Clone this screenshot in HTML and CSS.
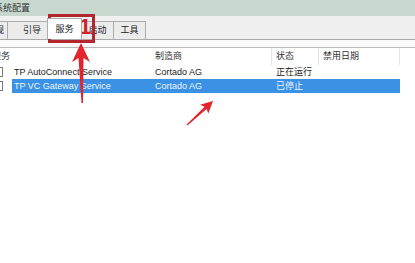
FILE: index.html
```html
<!DOCTYPE html>
<html lang="zh-CN">
<head>
    <meta charset="UTF-8">
    <title>系统配置</title>
    <link rel="stylesheet" href="styles.css">
</head>
<body>
    <div class="window">
        <div class="titlebar"><span class="title">系统配置</span></div>

        <div class="tabstrip">
            <div class="tab first">常规</div>
            <div class="tab second">引导</div>
            <div class="tab active">服务</div>
            <div class="tab">启动</div>
            <div class="tab">工具</div>
        </div>

        <div class="panel">
            <div class="list">
                <div class="row head">
                    <div class="cell name-head">服务</div>
                    <div class="cell">制造商</div>
                    <div class="cell">状态</div>
                    <div class="cell">禁用日期</div>
                </div>
                <div class="row">
                    <div class="chk"><span class="box"></span></div>
                    <div class="cell">TP AutoConnect Service</div>
                    <div class="cell">Cortado AG</div>
                    <div class="cell">正在运行</div>
                    <div class="cell"></div>
                </div>
                <div class="row selected">
                    <div class="chk"><span class="box"></span></div>
                    <div class="cell">TP VC Gateway Service</div>
                    <div class="cell">Cortado AG</div>
                    <div class="cell">已停止</div>
                    <div class="cell"></div>
                </div>
            </div>
        </div>
    </div>

    <!-- annotations drawn over the screenshot -->
    <div class="mark-box"></div>
    <div class="mark-num">1</div>
    <svg class="arrows" width="415" height="263" viewBox="0 0 415 263">
        <polygon points="81,43 90,62 83.5,58 83,103 81.5,103 78.5,58 72,62" fill="#e3242b"/>
        <polygon points="213,101 208.3,113.5 206.6,108.9 187.4,125.4 186.6,124.6 204.6,106.7 200.1,104.7" fill="#e3242b"/>
    </svg>
</body>
</html>
```

FILE: styles.css
```css
body {
    margin: 0;
    width: 415px;
    height: 263px;
    overflow: hidden;
    background: #fff;
    font-family: "Liberation Sans", "Noto Sans CJK SC", sans-serif;
    font-size: 9px;
    color: #1c1c1c;
    position: relative;
}
.titlebar {
    height: 16px;
    line-height: 16px;
    background: #c9d8cf;
    color: #333;
    overflow: hidden;
    white-space: nowrap;
}
.title {
    display: inline-block;
    margin-left: -6px;
}
.tabstrip {
    height: 23px;
    background: #f0f0f0;
    border-bottom: 1px solid #a9a9a9;
    display: flex;
    align-items: flex-end;
    overflow: hidden;
}
.tab {
    width: 33px;
    height: 18px;
    line-height: 17px;
    box-sizing: border-box;
    text-align: center;
    border: 1px solid #acacac;
    border-bottom: none;
    margin-right: -1px;
    background: #ececec;
    color: #222;
    flex-shrink: 0;
}
.tab.first {
    margin-left: -25px;
    text-align: left;
    padding-left: 10px;
}
.tab.second {
    width: 42px;
    padding-left: 8px;
}
.tab.active {
    width: 35px;
    height: 22px;
    margin: 0 -1px -1px -1px;
    line-height: 21px;
    background: #fff;
    position: relative;
    z-index: 1;
}
.panel {
    background: #fafafa;
    padding-top: 7px;
}
.list {
    background: #fff;
    border-top: 1px solid #b9b9b9;
    height: 215px;
}
.row {
    display: grid;
    grid-template-columns: 12px 139px 121px 47px 81px 1fr;
    height: 14px;
    line-height: 14px;
    white-space: nowrap;
}
.row.head {
    height: 17px;
    line-height: 16px;
    grid-template-columns: 151px 121px 47px 81px 1fr;
}
.row.head .cell {
    border-right: 1px solid #e3e3e3;
    color: #333;
}
.row.head .name-head {
    padding-left: 0;
    text-indent: -8px;
    border-right-color: #fff;
}
.cell {
    padding-left: 4px;
    overflow: hidden;
}
.row .cell:nth-child(2) {
    padding-left: 2px;
}
.row.head .cell:nth-child(2) {
    padding-left: 4px;
}
.row.selected .cell {
    background: #3b91e4;
    color: #eef5ff;
}
.chk {
    overflow: hidden;
}
.box {
    display: block;
    width: 11px;
    height: 10px;
    margin: 2px 0 0 -8px;
    border: 1px solid #7a7a7a;
    box-sizing: border-box;
    background: #fff;
}
.mark-box {
    position: absolute;
    left: 48px;
    top: 14px;
    width: 47px;
    height: 29px;
    box-sizing: border-box;
    border: 3px solid #b3262d;
}
.mark-num {
    position: absolute;
    left: 79px;
    top: 14px;
    font-family: "Liberation Sans", sans-serif;
    font-weight: bold;
    font-size: 22px;
    line-height: 26px;
    color: #cf2229;
}
.arrows {
    position: absolute;
    left: 0;
    top: 0;
}
```
